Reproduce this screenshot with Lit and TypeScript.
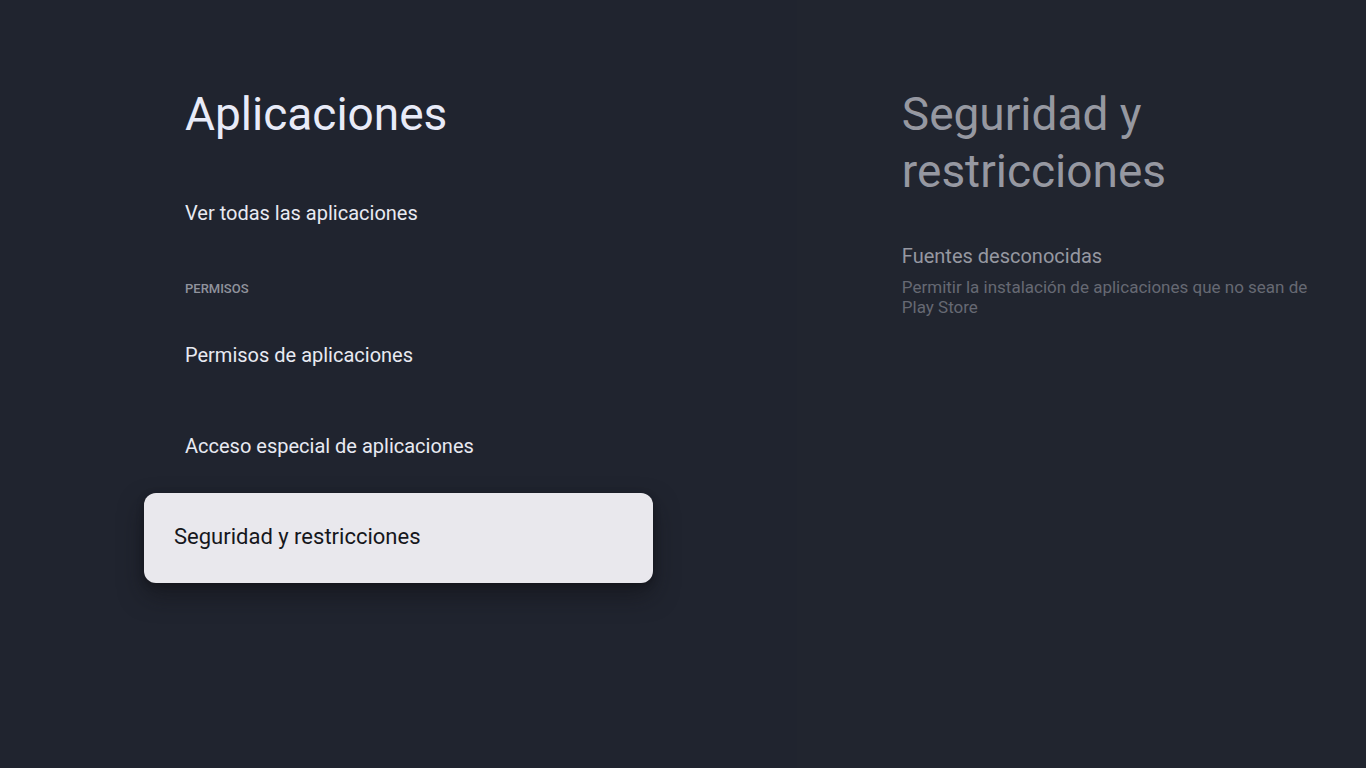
import { LitElement, html, css } from "lit"
import { customElement, property, state } from "lit/decorators.js"
import { classMap } from "lit/directives/class-map.js"


@customElement('settings-row')
export class SettingsRow extends LitElement {
   @property()
   label = ''

   @property({ type: Boolean })
   focused = false

   render() {
      return html`
         <button class=${classMap({ row: true, focused: this.focused })}>
            ${this.label}
         </button>
      `
   }

   static styles = css`
      :host {
         display: block;
      }
      .row {
         display: block;
         width: 100%;
         min-height: 90px;
         padding: 0 41px 2px;
         border: none;
         border-radius: 12px;
         background: none;
         color: #e8eaf2;
         font-family: Roboto, sans-serif;
         font-size: 20px;
         line-height: 24px;
         text-align: left;
         cursor: pointer;
      }
      .row.focused {
         padding: 0 30px 2px;
         background: #e9e8ed;
         color: #16171c;
         font-size: 22px;
         box-shadow: 0 12px 24px rgb(16 15 20 / 0.5), 0 2px 6px rgb(16 15 20 / 0.5);
      }
      .row:focus {
         outline: none;
      }
   `
}


@customElement('preview-pane')
export class PreviewPane extends LitElement {
   render() {
      return html`
         <h2 class="title">Seguridad y restricciones</h2>
         <div class="item">
            <h3 class="name">Fuentes desconocidas</h3>
            <p class="summary">Permitir la instalación de aplicaciones que no sean de Play Store</p>
         </div>
      `
   }

   static styles = css`
      :host {
         display: flex;
         flex-direction: column;
         gap: 44px;
         padding: 86px 48px 48px 105px;
         background: #21252f;
      }
      .title {
         max-width: 340px;
         margin: 0;
         color: #9698a1;
         font-size: 46px;
         font-weight: 400;
         line-height: 57px;
      }
      .item {
         display: flex;
         flex-direction: column;
         gap: 9px;
      }
      .name {
         margin: 0;
         color: #9698a1;
         font-size: 20px;
         font-weight: 400;
         line-height: 24px;
      }
      .summary {
         margin: 0;
         color: #666973;
         font-size: 17px;
         line-height: 20px;
      }
   `
}


@customElement('app-root')
export class AppRoot extends LitElement {
   @state()
   current = 'Seguridad y restricciones'

   row(label: string) {
      return html`
         <settings-row
            label=${label}
            ?focused=${this.current === label}
            @click=${() => this.current = label}
         ></settings-row>
      `
   }

   render() {
      return html`
         <main class="pane">
            <h1 class="title">Aplicaciones</h1>
            <div class="rows">
               ${this.row('Ver todas las aplicaciones')}
               <h2 class="category">PERMISOS</h2>
               ${this.row('Permisos de aplicaciones')}
               ${this.row('Acceso especial de aplicaciones')}
               ${this.row('Seguridad y restricciones')}
            </div>
         </main>
         <preview-pane></preview-pane>
      `
   }

   static styles = css`
      :host {
         display: grid;
         grid-template-columns: 7fr 5fr;
         min-height: 100vh;
         background: #20242f;
         font-family: Roboto, sans-serif;
      }
      .pane {
         display: flex;
         flex-direction: column;
         gap: 26px;
         padding: 86px 144px 48px;
      }
      .title {
         margin: 0;
         padding: 0 41px;
         color: #e8ebf8;
         font-size: 46px;
         font-weight: 400;
         line-height: 57px;
      }
      .rows {
         display: flex;
         flex-direction: column;
         gap: 1px;
      }
      .category {
         margin: 0;
         padding: 19px 41px 11px;
         color: #90939d;
         font-size: 13px;
         font-weight: 500;
         line-height: 20px;
      }
   `
}


declare global {
   interface HTMLElementTagNameMap {
      'settings-row': SettingsRow
      'preview-pane': PreviewPane
      'app-root': AppRoot
   }
}
